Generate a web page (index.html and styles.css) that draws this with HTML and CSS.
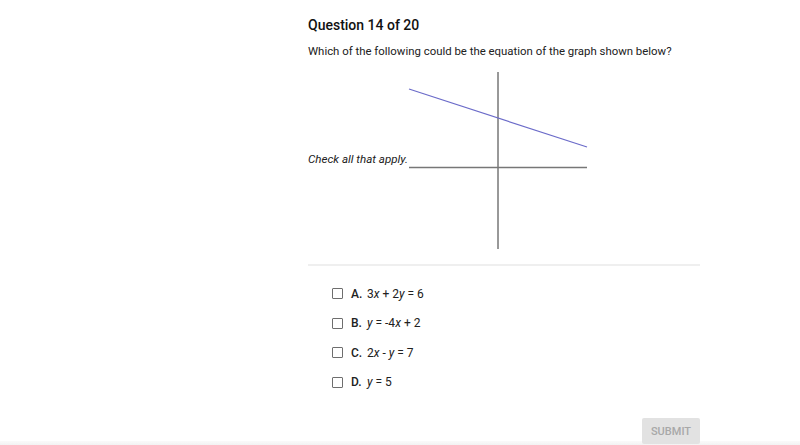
FILE: index.html
```html
<!DOCTYPE html>
<html lang="en">
<head>
    <meta charset="UTF-8">
    <title>Question 14 of 20</title>
    <link rel="stylesheet" href="styles.css">
</head>
<body>
    <div class="page">
        <div class="question">
            <h1>Question 14 of 20</h1>
            <p class="prompt">Which of the following could be the equation of the graph shown below?</p>
            <div class="figure">
                <span class="hint">Check all that apply.</span>
                <svg class="graph" width="180" height="178" viewBox="0 0 180 178">
                    <line x1="90" y1="0" x2="90" y2="177" stroke="#333" stroke-width="1"/>
                    <line x1="1" y1="95.5" x2="179" y2="95.5" stroke="#777" stroke-width="1.5"/>
                    <line x1="1" y1="17" x2="179" y2="75" stroke="#6b6bc9" stroke-width="1.2"/>
                </svg>
            </div>
            <div class="divider"></div>
            <ul class="answers">
                <li><span class="box"></span><b>A.</b><span>3<i>x</i> + 2<i>y</i> = 6</span></li>
                <li><span class="box"></span><b>B.</b><span><i>y</i> = -4<i>x</i> + 2</span></li>
                <li><span class="box"></span><b>C.</b><span>2<i>x</i> - <i>y</i> = 7</span></li>
                <li><span class="box"></span><b>D.</b><span><i>y</i> = 5</span></li>
            </ul>
            <div class="actions">
                <button class="submit">SUBMIT</button>
            </div>
        </div>
        <div class="edge"></div>
    </div>
</body>
</html>
```
FILE: styles.css
```css
body {
    margin: 0;
    font-family: Roboto, "Liberation Sans", Arial, sans-serif;
    color: #212121;
    background: #fff;
}
.page {
    height: 445px;
    overflow: hidden;
}
.question {
    margin-left: 308px;
    width: 392px;
    padding-top: 16px;
}
h1 {
    margin: 0;
    font-size: 14px;
    font-weight: 500;
    line-height: 18px;
    color: #111;
}
.prompt {
    margin: 8px 0 0;
    font-size: 11.4px;
    line-height: 18px;
}
.figure {
    display: flex;
    align-items: center;
    margin-top: 12px;
}
.hint {
    flex: none;
    white-space: nowrap;
    font-size: 11.6px;
    font-style: italic;
    width: 100px;
    margin-top: -4px;
}
.graph {
    display: block;
    flex: none;
}
.divider {
    height: 2px;
    background: #efefef;
    margin-top: 14px;
}
.answers {
    list-style: none;
    margin: 13px 0 0;
    padding: 0 0 0 24px;
    font-size: 12px;
}
.answers li {
    display: flex;
    align-items: center;
    height: 29.5px;
}
.box {
    box-sizing: border-box;
    width: 11px;
    height: 11px;
    border: 1.5px solid #6e6e6e;
    border-radius: 1px;
    margin-right: 8px;
}
.answers b {
    font-weight: 500;
    width: 16px;
}
.answers i {
    font-style: italic;
}
.actions {
    display: flex;
    justify-content: flex-end;
    margin-top: 21px;
    margin-bottom: -3px;
}
.submit {
    position: relative;
    z-index: 1;
    font-family: Roboto, sans-serif;
    font-size: 11px;
    font-weight: 500;
    color: #a8a8a8;
    background: #e2e2e2;
    border: none;
    border-radius: 2px;
    width: 58px;
    height: 26px;
    padding: 0;
}
.edge {
    height: 6px;
    background: linear-gradient(#fafafa, #efefef);
}
```
